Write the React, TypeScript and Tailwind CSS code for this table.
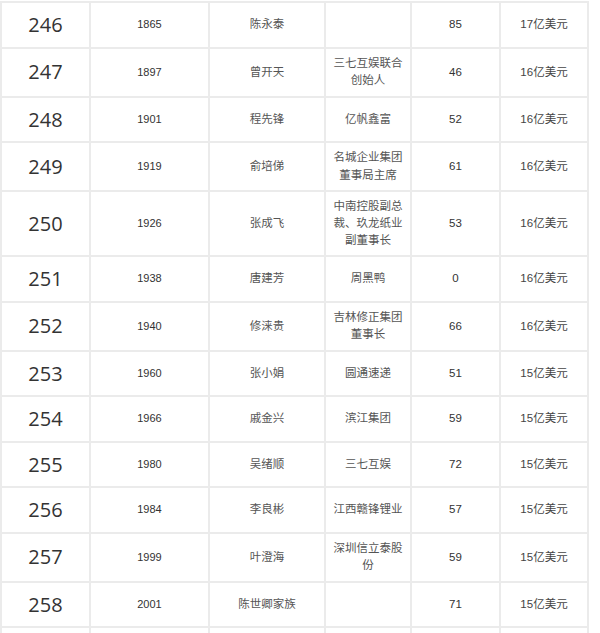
import React from "react";

type Row = {
  rank: string;
  year: string;
  name: string;
  company: string[];
  age: string;
  wealth: string;
};

const rows: Row[] = [
  { rank: "246", year: "1865", name: "陈永泰", company: [], age: "85", wealth: "17亿美元" },
  { rank: "247", year: "1897", name: "曾开天", company: ["三七互娱联合", "创始人"], age: "46", wealth: "16亿美元" },
  { rank: "248", year: "1901", name: "程先锋", company: ["亿帆鑫富"], age: "52", wealth: "16亿美元" },
  { rank: "249", year: "1919", name: "俞培俤", company: ["名城企业集团", "董事局主席"], age: "61", wealth: "16亿美元" },
  { rank: "250", year: "1926", name: "张成飞", company: ["中南控股副总", "裁、玖龙纸业", "副董事长"], age: "53", wealth: "16亿美元" },
  { rank: "251", year: "1938", name: "唐建芳", company: ["周黑鸭"], age: "0", wealth: "16亿美元" },
  { rank: "252", year: "1940", name: "修涞贵", company: ["吉林修正集团", "董事长"], age: "66", wealth: "16亿美元" },
  { rank: "253", year: "1960", name: "张小娟", company: ["圆通速递"], age: "51", wealth: "15亿美元" },
  { rank: "254", year: "1966", name: "戚金兴", company: ["滨江集团"], age: "59", wealth: "15亿美元" },
  { rank: "255", year: "1980", name: "吴绪顺", company: ["三七互娱"], age: "72", wealth: "15亿美元" },
  { rank: "256", year: "1984", name: "李良彬", company: ["江西赣锋锂业"], age: "57", wealth: "15亿美元" },
  { rank: "257", year: "1999", name: "叶澄海", company: ["深圳信立泰股", "份"], age: "59", wealth: "15亿美元" },
  { rank: "258", year: "2001", name: "陈世卿家族", company: [], age: "71", wealth: "15亿美元" },
];

const cell =
  "flex flex-col items-center justify-center border-r-2 border-b-2 border-[#ebebeb] px-[6px] py-[6px] text-center";

export default function App() {
  return (
    <div
      className="w-[600px] h-[633px] overflow-hidden bg-white pt-[1px]"
      style={{ fontFamily: '"Liberation Sans", "Noto Sans CJK SC", sans-serif' }}
    >
      <div className="grid w-[589px] grid-cols-[89px_119px_116px_86px_89px_88px] border-l-2 border-t-2 border-[#ebebeb]">
        {rows.map((r) => {
          const lh = r.company.length === 2 ? "leading-[17.5px]" : "leading-[17px]";
          return (
            <React.Fragment key={r.rank}>
              <div className={cell}>
                <span
                  className="text-[20px] leading-[31.5px] text-[#333]"
                  style={{ fontFamily: '"Open Sans", "Noto Sans", sans-serif' }}
                >
                  {r.rank}
                </span>
              </div>
              <div className={cell}>
                <span className="text-[11px] leading-[17px] text-[#333]">{r.year}</span>
              </div>
              <div className={cell}>
                <span className="text-[11.5px] leading-[17px] text-[#555]">{r.name}</span>
              </div>
              <div className={cell}>
                {r.company.map((line, i) => (
                  <span key={i} className={"block text-[11.5px] text-[#555] " + lh}>
                    {line}
                  </span>
                ))}
              </div>
              <div className={cell}>
                <span className="text-[11.5px] leading-[17px] text-[#333]">{r.age}</span>
              </div>
              <div className={cell}>
                <span className="text-[11.5px] leading-[17px] text-[#444]">{r.wealth}</span>
              </div>
            </React.Fragment>
          );
        })}
        {[0, 1, 2, 3, 4, 5].map((i) => (
          <div key={"e" + i} className={cell + " h-[46px]"} />
        ))}
      </div>
    </div>
  );
}
